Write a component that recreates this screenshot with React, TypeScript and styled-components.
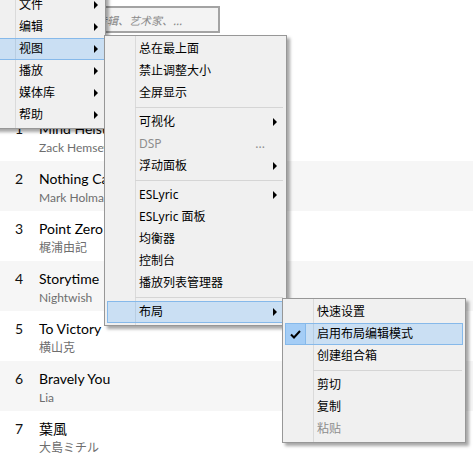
import React from 'react';
import styled, { createGlobalStyle } from 'styled-components';

const Global = createGlobalStyle`
  html, body { margin: 0; padding: 0; background: #fff; }
  body { font-family: Lato, "Noto Sans CJK SC", sans-serif; overflow: hidden; }
`;

const Page = styled.div`
  position: relative;
  width: 473px;
  height: 453px;
  overflow: hidden;
  background: #fff;
`;

const Header = styled.div`
  height: 111px;
  box-sizing: border-box;
  padding: 6px 0 0 20px;
`;

const Search = styled.div`
  width: 200px;
  height: 27px;
  box-sizing: border-box;
  border: 2px solid #a3a3a3;
  background: #f3f3f3;
  padding-left: 19px;
  display: flex;
  align-items: center;
  font-family: "Noto Sans CJK SC", sans-serif;
  font-size: 11px;
  font-style: italic;
  color: #8a8a8a;
  white-space: nowrap;
  overflow: hidden;
`;

const List = styled.div`
  display: flex;
  flex-direction: column;
`;

const Row = styled.div<{ $alt: boolean }>`
  display: flex;
  height: 50px;
  box-sizing: border-box;
  padding-top: 8px;
  background: ${(p) => (p.$alt ? '#f6f6f6' : '#ffffff')};
`;

const Num = styled.div`
  width: 24px;
  padding-left: 15px;
  font-size: 14px;
  line-height: 20px;
  color: #111;
`;

const Info = styled.div`
  display: flex;
  flex-direction: column;
`;

const Title = styled.div`
  font-size: 14px;
  line-height: 20px;
  color: #000;
  white-space: nowrap;
`;

const Artist = styled.div`
  font-size: 12px;
  line-height: 18px;
  color: #6e6e6e;
  white-space: nowrap;
`;

const MenuBox = styled.div<{ $x: number; $y: number; $w: number; $z: number; $pr: number }>`
  position: absolute;
  left: ${(p) => p.$x}px;
  top: ${(p) => p.$y}px;
  width: ${(p) => p.$w}px;
  z-index: ${(p) => p.$z};
  box-sizing: border-box;
  border: 1px solid #979797;
  padding: 2px ${(p) => p.$pr}px 2px 2px;
  background: linear-gradient(to right, transparent 30px, #dadada 30px, #dadada 31px, transparent 31px), #f0f0f0;
  box-shadow: 3px 3px 3px rgba(0, 0, 0, 0.35);
  font-family: "Noto Sans", "Noto Sans CJK SC", sans-serif;
  font-size: 12px;
  display: flex;
  flex-direction: column;
`;

const Item = styled.div<{ $hot?: boolean; $disabled?: boolean }>`
  display: flex;
  align-items: center;
  height: 22px;
  box-sizing: border-box;
  border: 1px solid ${(p) => (p.$hot ? '#86b9ea' : 'transparent')};
  background: ${(p) => (p.$hot ? 'rgba(51, 153, 255, 0.2)' : 'transparent')};
  color: ${(p) => (p.$disabled ? '#8d8d8d' : '#000')};
  line-height: 20px;
  padding-right: 6px;
  white-space: nowrap;
`;

const Lead = styled.span<{ $checked?: boolean }>`
  width: 21px;
  height: 22px;
  margin: 0 0 0 -1px;
  box-sizing: border-box;
  display: flex;
  align-items: center;
  justify-content: center;
  border: 1px solid ${(p) => (p.$checked ? '#86b9ea' : 'transparent')};
  background: ${(p) => (p.$checked ? 'rgba(51, 153, 255, 0.25)' : 'transparent')};
`;

const Label = styled.span`
  margin-left: 11px;
`;

const Arrow = styled.span`
  margin-left: auto;
  width: 0;
  height: 0;
  border-left: 4px solid #000;
  border-top: 4px solid transparent;
  border-bottom: 4px solid transparent;
`;

const Shortcut = styled.span`
  margin-left: auto;
  margin-right: 12px;
  color: #8d8d8d;
`;

const Sep = styled.div`
  height: 1px;
  margin: 3px 1px 3px 28px;
  background: #d5d5d5;
`;

type Entry =
  | { sep: true }
  | { label: string; sub?: boolean; hot?: boolean; disabled?: boolean; checked?: boolean; shortcut?: string; sep?: false };

const Check = () => (
  <svg width="11" height="9" viewBox="0 0 11 9">
    <path d="M1 4.5 L4 7.5 L10 1" fill="none" stroke="#000" strokeWidth="2" />
  </svg>
);

const Menu: React.FC<{ x: number; y: number; w: number; z: number; pr?: number; items: Entry[] }> = ({
  x,
  y,
  w,
  z,
  pr = 2,
  items,
}) => (
  <MenuBox $x={x} $y={y} $w={w} $z={z} $pr={pr}>
    {items.map((it, i) =>
      it.sep ? (
        <Sep key={i} />
      ) : (
        <Item key={i} $hot={it.hot} $disabled={it.disabled}>
          <Lead $checked={it.checked}>{it.checked ? <Check /> : null}</Lead>
          <Label>{it.label}</Label>
          {it.shortcut ? <Shortcut>{it.shortcut}</Shortcut> : null}
          {it.sub ? <Arrow /> : null}
        </Item>
      )
    )}
  </MenuBox>
);

const mainItems: Entry[] = [
  { label: '文件', sub: true },
  { label: '编辑', sub: true },
  { label: '视图', sub: true, hot: true },
  { label: '播放', sub: true },
  { label: '媒体库', sub: true },
  { label: '帮助', sub: true },
];

const viewItems: Entry[] = [
  { label: '总在最上面' },
  { label: '禁止调整大小' },
  { label: '全屏显示' },
  { sep: true },
  { label: '可视化', sub: true },
  { label: 'DSP', disabled: true, shortcut: '...' },
  { label: '浮动面板', sub: true },
  { sep: true },
  { label: 'ESLyric', sub: true },
  { label: 'ESLyric 面板' },
  { label: '均衡器' },
  { label: '控制台' },
  { label: '播放列表管理器' },
  { sep: true },
  { label: '布局', sub: true, hot: true },
];

const layoutItems: Entry[] = [
  { label: '快速设置' },
  { label: '启用布局编辑模式', hot: true, checked: true },
  { label: '创建组合箱' },
  { sep: true },
  { label: '剪切' },
  { label: '复制' },
  { label: '粘贴', disabled: true },
];

const tracks = [
  { n: 1, t: 'Mind Heist', a: 'Zack Hemsey' },
  { n: 2, t: 'Nothing Can Stop Us', a: 'Mark Holman' },
  { n: 3, t: 'Point Zero', a: '梶浦由記' },
  { n: 4, t: 'Storytime', a: 'Nightwish' },
  { n: 5, t: 'To Victory', a: '横山克' },
  { n: 6, t: 'Bravely You', a: 'Lia' },
  { n: 7, t: '葉風', a: '大島ミチル' },
];

export default function App() {
  return (
    <Page>
      <Global />
      <Header>
        <Search>搜索标题、专辑、艺术家、...</Search>
      </Header>
      <List>
        {tracks.map((tr, i) => (
          <Row key={tr.n} $alt={i % 2 === 1}>
            <Num>{tr.n}</Num>
            <Info>
              <Title>{tr.t}</Title>
              <Artist>{tr.a}</Artist>
            </Info>
          </Row>
        ))}
      </List>
      <Menu x={-16} y={-9} w={122} z={1} pr={0} items={mainItems} />
      <Menu x={104} y={35} w={183} z={2} items={viewItems} />
      <Menu x={282} y={298} w={184} z={3} items={layoutItems} />
    </Page>
  );
}
